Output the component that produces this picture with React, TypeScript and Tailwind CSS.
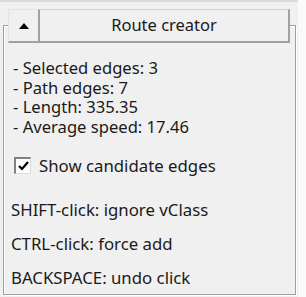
import React from "react";

const font = { fontFamily: '"Noto Sans", "Open Sans", sans-serif' };

const Checkbox = ({ checked }: { checked: boolean }) => (
  <span className="w-[17px] h-[17px] bg-white border-t-2 border-l-2 border-t-[#808080] border-l-[#808080] border-b border-r border-b-[#dcdcdc] border-r-[#dcdcdc] flex items-center justify-center">
    {checked && (
      <svg width="11" height="10" viewBox="0 0 11 10">
        <path d="M1 5 L4 8 L10 1" stroke="#000" strokeWidth="2.2" fill="none" />
      </svg>
    )}
  </span>
);

export default function App() {
  const stats = [
    "- Selected edges: 3",
    "- Path edges: 7",
    "- Length: 335.35",
    "- Average speed: 17.46",
  ];
  return (
    <div className="w-[306px] h-[297px] bg-[#f0f0f0] flex text-[#1a1a1a]" style={font}>
      <div className="w-[298px] h-full border-t-2 border-t-[#dadada] pt-[23px] pl-[3px]">
        {/* group box */}
        <div className="w-[293px] h-[270px] border border-[#a0a0a0] shadow-[inset_1px_1px_0_#fff,1px_1px_0_#fff]">
          <div className="flex -mt-[17px] ml-[4px] h-[34px]">
            <button className="w-[32px] h-full bg-[#f0f0f0] border-t border-l border-t-[#e3e3e3] border-l-[#e3e3e3] border-b-2 border-r-2 border-b-[#a0a0a0] border-r-[#a0a0a0] flex items-center justify-center">
              <svg width="10" height="6" viewBox="0 0 10 6">
                <path d="M0 6 L5 0 L10 6 Z" fill="#000" />
              </svg>
            </button>
            <button className="w-[250px] h-full bg-[#f0f0f0] border-t border-t-[#cfcfcf] border-b-2 border-r-2 border-b-[#a0a0a0] border-r-[#a0a0a0] text-[16.5px] leading-none flex items-center justify-center">
              Route creator
            </button>
          </div>
          <div className="pl-[9px] pt-[15px] text-[16.6px] leading-[19.7px]">
            {stats.map((s) => (
              <div key={s}>{s}</div>
            ))}
          </div>
          <div className="flex items-center gap-[8px] pl-[10px] mt-[16px]">
            <Checkbox checked />
            <span className="text-[16.8px]">Show candidate edges</span>
          </div>
          <div className="pl-[7px] text-[16.8px] mt-[21px] flex flex-col gap-[12px] leading-[22px]">
            <div>SHIFT-click: ignore vClass</div>
            <div>CTRL-click: force add</div>
            <div>BACKSPACE: undo click</div>
          </div>
        </div>
      </div>
      <div className="flex-1 bg-[#fafafa]" />
    </div>
  );
}
